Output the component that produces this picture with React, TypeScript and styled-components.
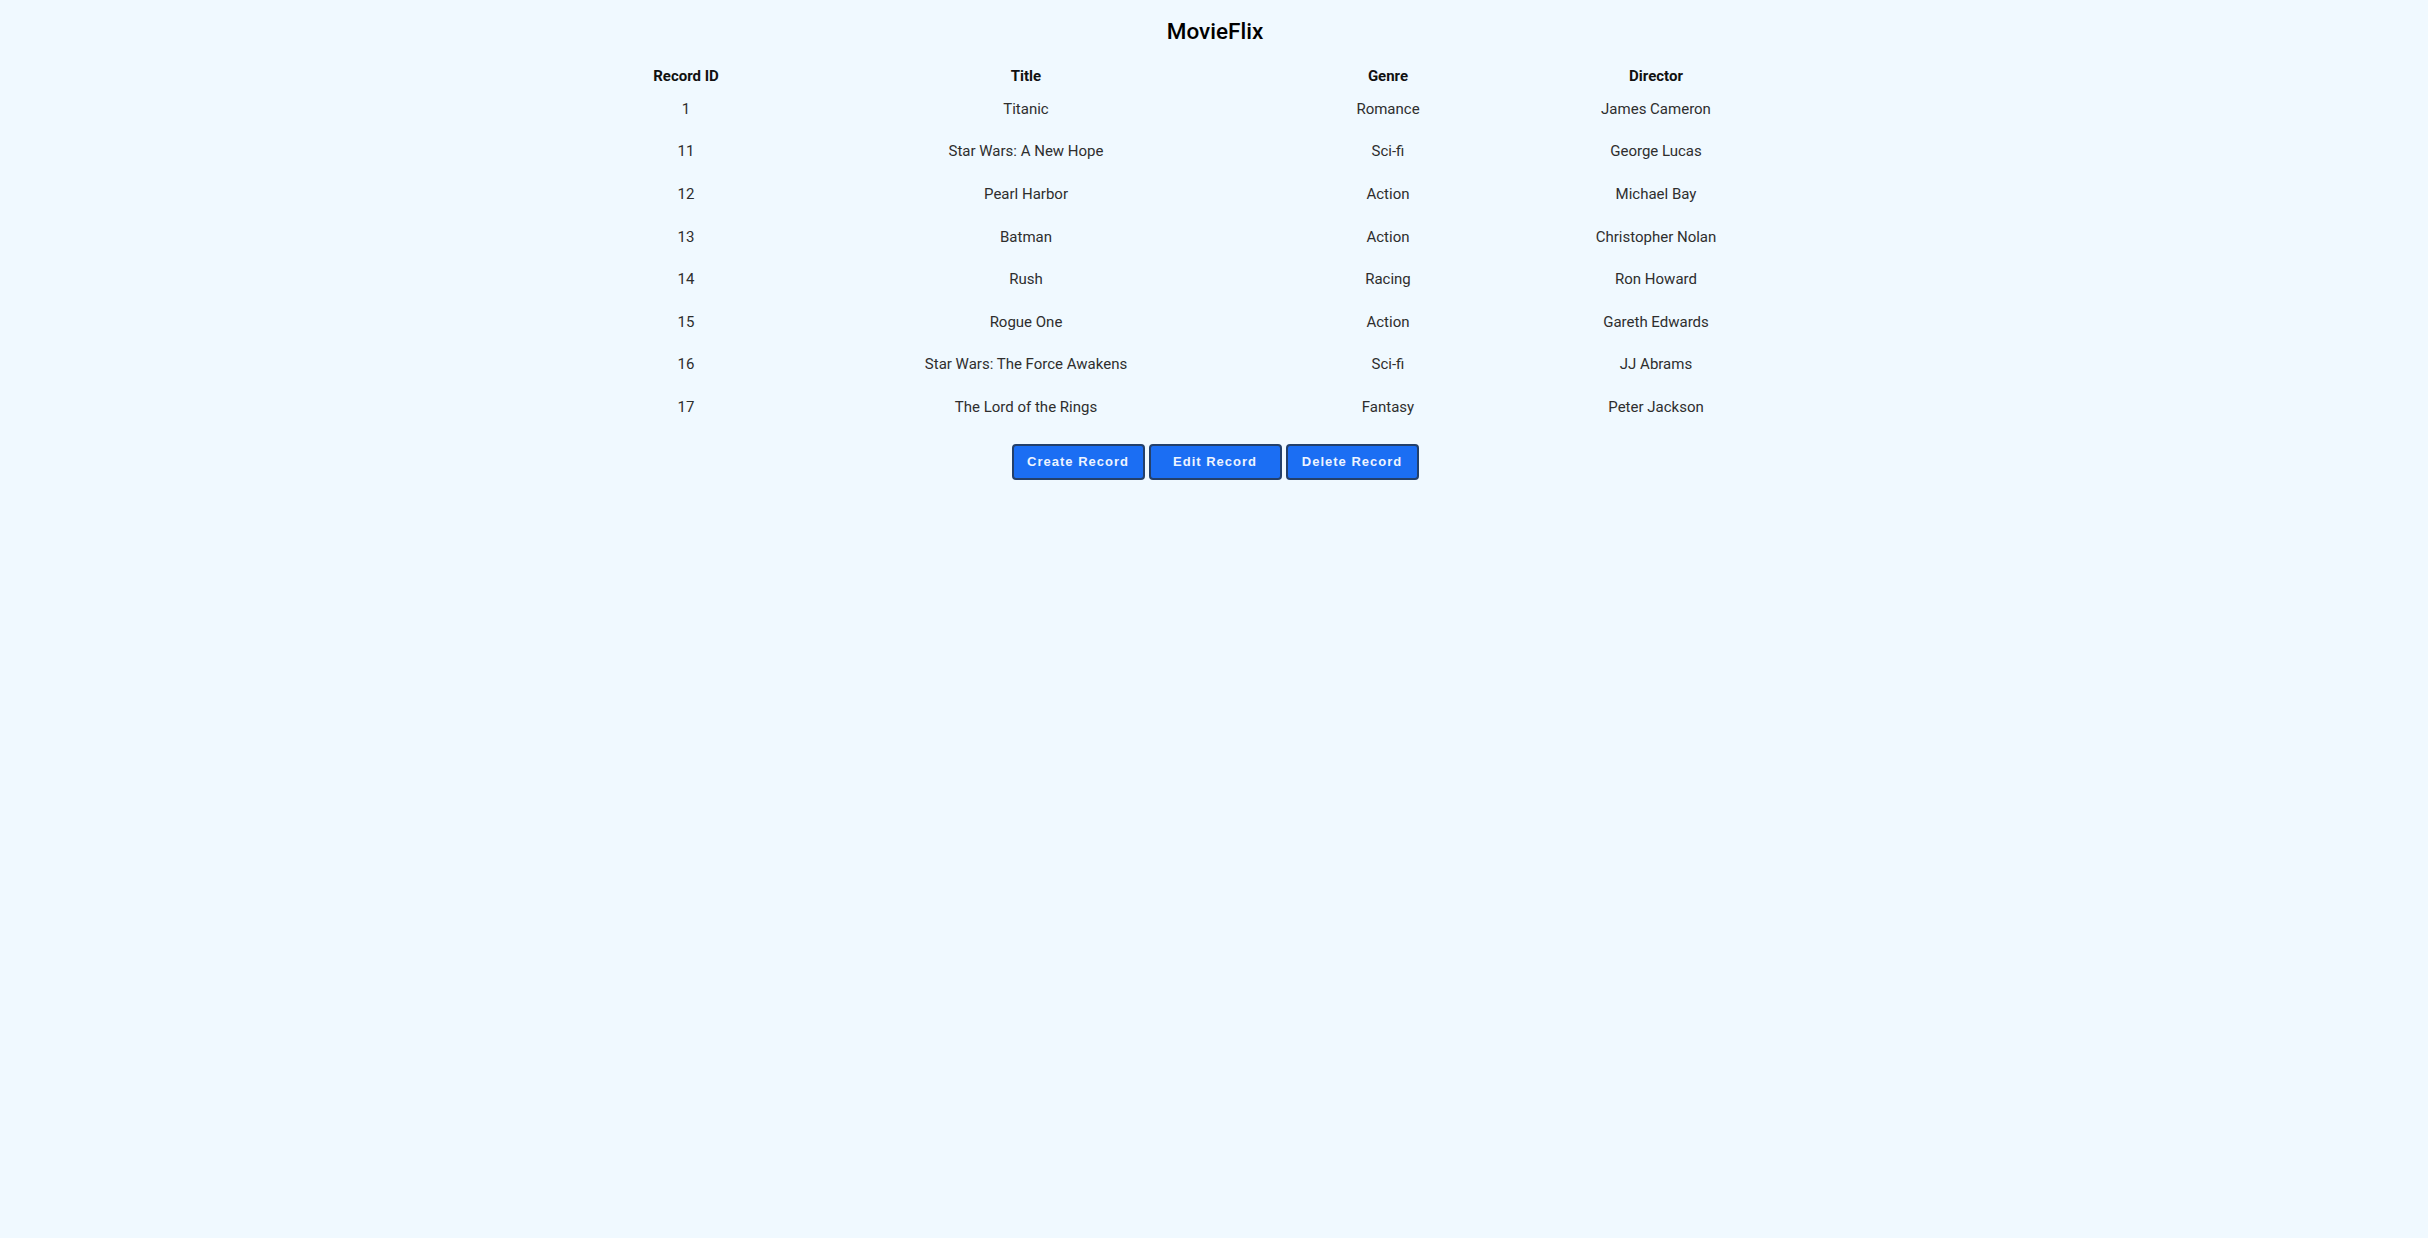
import React from "react";
import styled, { createGlobalStyle } from "styled-components";

const GlobalStyle = createGlobalStyle`
  html, body { margin: 0; padding: 0; background: #f0f9ff; }
  body { font-family: Roboto, "Noto Sans", sans-serif; }
`;

const Page = styled.main`
  display: flex;
  flex-direction: column;
  align-items: center;
  padding: 17px 0 0 2px;
`;

const Heading = styled.h1`
  margin: 0;
  font-family: Roboto, sans-serif;
  font-weight: 500;
  font-size: 22.5px;
  line-height: 28px;
  color: #000;
`;

const Table = styled.table`
  border-collapse: collapse;
  margin-top: 18.5px;
  table-layout: fixed;
`;

const HeadCell = styled.th<{ $w: number }>`
  width: ${(p) => p.$w}px;
  padding: 0;
  height: 24px;
  font-size: 15px;
  font-weight: 700;
  color: #111;
  text-align: center;
`;

const Cell = styled.td`
  padding: 0;
  height: 42.6px;
  font-size: 15px;
  color: #2e2e2e;
  text-align: center;
`;

const ButtonRow = styled.div`
  display: flex;
  gap: 4px;
  margin-top: 15.5px;
`;

const ActionButton = styled.button`
  width: 133px;
  height: 36px;
  padding: 0;
  background: #1b6ef3;
  border: 2px solid #24406a;
  border-radius: 4px;
  color: #eef4ff;
  font-family: "Liberation Sans", Arial, sans-serif;
  font-weight: 700;
  font-size: 13px;
  letter-spacing: 1px;
  cursor: pointer;
`;

const columns = [
  { label: "Record ID", w: 158 },
  { label: "Title", w: 522 },
  { label: "Genre", w: 202 },
  { label: "Director", w: 334 },
];

const movies = [
  [1, "Titanic", "Romance", "James Cameron"],
  [11, "Star Wars: A New Hope", "Sci-fi", "George Lucas"],
  [12, "Pearl Harbor", "Action", "Michael Bay"],
  [13, "Batman", "Action", "Christopher Nolan"],
  [14, "Rush", "Racing", "Ron Howard"],
  [15, "Rogue One", "Action", "Gareth Edwards"],
  [16, "Star Wars: The Force Awakens", "Sci-fi", "JJ Abrams"],
  [17, "The Lord of the Rings", "Fantasy", "Peter Jackson"],
];

export default function App() {
  return (
    <>
      <GlobalStyle />
      <Page>
        <Heading>MovieFlix</Heading>
        <Table>
          <thead>
            <tr>
              {columns.map((c) => (
                <HeadCell key={c.label} $w={c.w}>
                  {c.label}
                </HeadCell>
              ))}
            </tr>
          </thead>
          <tbody>
            {movies.map((m) => (
              <tr key={String(m[0])}>
                {m.map((v, i) => (
                  <Cell key={i}>{v}</Cell>
                ))}
              </tr>
            ))}
          </tbody>
        </Table>
        <ButtonRow>
          <ActionButton>Create Record</ActionButton>
          <ActionButton>Edit Record</ActionButton>
          <ActionButton>Delete Record</ActionButton>
        </ButtonRow>
      </Page>
    </>
  );
}
